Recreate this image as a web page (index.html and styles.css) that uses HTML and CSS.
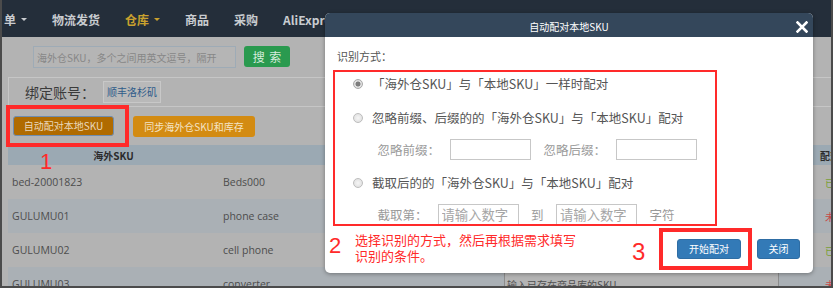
FILE: index.html
```html
<!DOCTYPE html>
<html lang="zh-CN">
<head>
<meta charset="utf-8">
<title>自动配对本地SKU</title>
<link rel="stylesheet" href="styles.css">
</head>
<body>
<div class="screen">
  <nav class="topnav">
    <span class="nav-item">单<i class="caret"></i></span>
    <span class="nav-item">物流发货</span>
    <span class="nav-item active">仓库<i class="caret"></i></span>
    <span class="nav-item">商品</span>
    <span class="nav-item">采购</span>
    <span class="nav-item">AliExpress<i class="caret"></i></span>
    <span class="nav-item">Wish</span>
    <span class="nav-item">eBay</span>
    <span class="nav-item">Amazon</span>
  </nav>

  <main class="content">
    <div class="search-row">
      <input class="search-input" type="text" placeholder="海外仓SKU，多个之间用英文逗号，隔开">
      <button class="search-btn" type="button">搜 索</button>
    </div>

    <div class="account-panel">
      <span class="account-label">绑定账号：</span>
      <span class="account-tag">顺丰洛杉矶</span>
    </div>

    <div class="action-row">
      <button class="btn-auto" type="button">自动配对本地SKU</button>
      <button class="btn-sync" type="button">同步海外仓SKU和库存</button>
    </div>

    <div class="sku-table">
      <div class="tr thead">
        <div class="th">海外SKU</div>
        <div class="th">本地SKU</div>
        <div class="th">商品SKU</div>
        <div class="th">配对状态</div>
      </div>
      <div class="tr">
        <div class="td">bed-20001823</div>
        <div class="td">Beds000</div>
        <div class="td"><input class="cell-input" type="text" placeholder="输入已存在商品库的SKU"></div>
        <div class="td status ok">已配对</div>
      </div>
      <div class="tr alt">
        <div class="td">GULUMU01</div>
        <div class="td">phone case</div>
        <div class="td"><input class="cell-input" type="text" placeholder="输入已存在商品库的SKU"></div>
        <div class="td status no">未配对</div>
      </div>
      <div class="tr">
        <div class="td">GULUMU02</div>
        <div class="td">cell phone</div>
        <div class="td"><input class="cell-input" type="text" placeholder="输入已存在商品库的SKU"></div>
        <div class="td status ok">已配对</div>
      </div>
      <div class="tr alt">
        <div class="td">GULUMU03</div>
        <div class="td">converter</div>
        <div class="td"><input class="cell-input" type="text" placeholder="输入已存在商品库的SKU"></div>
        <div class="td status no">未配对</div>
      </div>
    </div>
  </main>

  <div class="modal">
    <div class="modal-head">
      <span></span>
      <span class="modal-title">自动配对本地SKU</span>
      <svg class="modal-close" width="12" height="12" viewBox="0 0 12 12" aria-label="关闭">
        <path d="M1.5 1.5 L10.5 10.5 M10.5 1.5 L1.5 10.5" stroke="#fff" stroke-width="2.6" stroke-linecap="square" fill="none"/>
      </svg>
    </div>
    <div class="modal-body">
      <div class="mode-label">识别方式：</div>
      <div class="options">
        <label class="opt-row"><input class="radio" type="radio" name="mode" checked><span>「海外仓SKU」与「本地SKU」一样时配对</span></label>
        <label class="opt-row"><input class="radio" type="radio" name="mode"><span>忽略前缀、后缀的的「海外仓SKU」与「本地SKU」配对</span></label>
        <div class="sub-row">
          <span class="sub-label">忽略前缀：</span>
          <input class="field gap-s" type="text">
          <span class="sub-label gap-l">忽略后缀：</span>
          <input class="field gap-s" type="text">
        </div>
        <label class="opt-row"><input class="radio" type="radio" name="mode"><span>截取后的的「海外仓SKU」与「本地SKU」配对</span></label>
        <div class="sub-row">
          <span class="sub-label">截取第：</span>
          <input class="field gap-s" type="text" placeholder="请输入数字">
          <span class="sub-label gap-l">到</span>
          <input class="field gap-l" type="text" placeholder="请输入数字">
          <span class="sub-label gap-l">字符</span>
        </div>
      </div>
      <div class="modal-foot">
        <button class="btn-primary" type="button">开始配对</button>
        <button class="btn-close" type="button">关闭</button>
      </div>
    </div>
  </div>

  <div class="mark-box box-1"></div>
  <div class="mark-box box-2"></div>
  <div class="mark-box box-3"></div>
  <span class="mark-num num-1">1</span>
  <span class="mark-num num-2">2</span>
  <span class="mark-num num-3">3</span>
  <p class="mark-note">选择识别的方式，然后再根据需求填写<br>识别的条件。</p>
</div>
</body>
</html>
```

FILE: styles.css
```css
* { box-sizing: border-box; }

html, body {
  margin: 0;
  background: #ffffff;
}

body {
  font-family: "Noto Sans CJK SC", sans-serif;
}

.screen {
  position: relative;
  width: 833px;
  height: 288px;
  overflow: hidden;
  background: #b3b3b3;
  border: 2px solid #4b4b4b;
  border-top: 0;
}

/* ---------- top navigation ---------- */
.topnav {
  height: 37px;
  background: #242e3a;
  display: flex;
  align-items: center;
  gap: 25px;
  padding: 2px 0 0 2px;
  font-size: 12px;
  font-weight: 700;
  line-height: 14px;
  color: #c9ccd0;
  white-space: nowrap;
}

.nav-item {
  display: flex;
  align-items: center;
}

.nav-item.active { color: #c9a12e; }

.caret {
  width: 0;
  height: 0;
  margin-left: 5px;
  border-left: 3px solid transparent;
  border-right: 3px solid transparent;
  border-top: 3px solid currentColor;
}

/* ---------- page content ---------- */
.content {
  padding-top: 9px;
}

.search-row {
  display: flex;
  align-items: flex-start;
  height: 22px;
  padding-left: 31px;
}

.search-input {
  width: 203px;
  height: 22px;
  margin: 0;
  padding: 0 3px;
  border: 1px solid #9eabb6;
  background: #b5b5b5;
  font-family: "Noto Sans CJK SC", sans-serif;
  font-size: 10px;
  color: #555;
  outline: none;
}

.search-input::placeholder { color: #878787; }

.search-btn {
  width: 46px;
  height: 21px;
  margin-left: 8px;
  padding: 0;
  border: 0;
  border-radius: 3px;
  background: #2a9a4f;
  color: #d5ebdc;
  font-family: "Noto Sans CJK SC", sans-serif;
  font-size: 12px;
  line-height: 21px;
  word-spacing: 2px;
}

.account-panel {
  display: flex;
  align-items: center;
  height: 30px;
  margin: 9px 0 0 6px;
  padding-left: 16px;
  border: 1px solid #c6c6c6;
  border-right: 0;
}

.account-label {
  font-size: 14px;
  line-height: 16px;
  color: #3b3b3b;
}

.account-tag {
  height: 22px;
  margin-left: 8px;
  padding: 0 3px;
  border: 1px solid #c8c8c8;
  background: #b9b9b9;
  font-size: 10px;
  line-height: 20px;
  color: #2e5b8a;
}

.action-row {
  display: flex;
  align-items: flex-start;
  gap: 19px;
  margin-top: 9px;
  padding-left: 11px;
}

.btn-auto,
.btn-sync {
  padding: 0;
  border-radius: 3px;
  font-family: "Noto Sans CJK SC", sans-serif;
  font-size: 10px;
}

.btn-auto {
  width: 101px;
  height: 20px;
  border: 1px solid #6f8db0;
  background: #b06b00;
  color: #ead8bd;
  line-height: 18px;
}

.btn-sync {
  width: 122px;
  height: 21px;
  border: 0;
  background: #d38b12;
  color: #f3e3c6;
  line-height: 21px;
}

/* ---------- table ---------- */
.sku-table {
  width: 861px;
  margin: 8px 0 0 6px;
  font-family: "Open Sans", "Noto Sans CJK SC", sans-serif;
  font-size: 10.5px;
  color: #4d4d4d;
}

.tr {
  display: grid;
  grid-template-columns: 211px 281px 311px 58px;
}

.tr.alt { background: #aab0b5; }

.thead { background: #9ba9b3; }

.th {
  height: 20px;
  display: flex;
  align-items: center;
  justify-content: center;
  font-family: "Noto Sans CJK SC", sans-serif;
  font-size: 10px;
  font-weight: 700;
  color: #2b2b2b;
  white-space: nowrap;
}

.td {
  height: 34px;
  display: flex;
  align-items: center;
  padding-left: 4px;
  white-space: nowrap;
}

.td.status {
  justify-content: center;
  padding-left: 0;
  font-family: "Noto Sans CJK SC", sans-serif;
  font-size: 10px;
}

.td.ok { color: #7a9f37; }
.td.no { color: #c94848; }

.cell-input {
  width: 275px;
  height: 24px;
  margin: 0;
  padding: 0 2px;
  border: 1px solid #8c8c8c;
  background: #b4b4b4;
  font-family: "Noto Sans CJK SC", sans-serif;
  font-size: 10px;
}

.cell-input::placeholder { color: #505050; }

/* ---------- modal ---------- */
.modal {
  position: absolute;
  left: 323px;
  top: 13px;
  width: 488px;
  background: #ffffff;
  border-radius: 5px;
  overflow: hidden;
  box-shadow: 0 1px 4px rgba(0, 0, 0, 0.35);
  font-family: "Noto Sans CJK SC", sans-serif;
}

.modal-head {
  height: 24px;
  display: grid;
  grid-template-columns: 1fr auto 1fr;
  align-items: center;
  padding: 3px 5px 0;
  background: #34475b;
  color: #ffffff;
}

.modal-title {
  font-size: 10px;
  line-height: 14px;
}

.modal-close {
  justify-self: end;
  display: block;
}

.modal-body {
  padding: 12px 13px 14px 12px;
}

.mode-label {
  font-size: 11px;
  line-height: 14px;
  color: #555;
}

.options {
  margin-top: 4px;
  font-size: 12.5px;
  color: #555;
}

.opt-row {
  display: flex;
  align-items: center;
  height: 34px;
  padding-left: 16px;
  line-height: 16px;
  white-space: nowrap;
}

.radio {
  appearance: none;
  -webkit-appearance: none;
  width: 10px;
  height: 10px;
  margin: 0 9px 0 0;
  border: 1px solid #bdbdbd;
  border-radius: 50%;
  background: radial-gradient(circle, #f5f5f5 0, #dcdcdc 100%);
  flex: none;
}

.radio:checked {
  border-color: #a9a9a9;
  background: radial-gradient(circle, #7d7d7d 0, #7d7d7d 2.2px, #e2e2e2 2.8px, #d6d6d6 100%);
}

.sub-row {
  display: flex;
  align-items: flex-start;
  height: 31px;
  padding: 4px 0 0 40.5px;
  white-space: nowrap;
}

.sub-label {
  line-height: 21px;
  color: #9a9a9a;
}

.field {
  width: 81px;
  height: 21px;
  margin: 0;
  padding: 0 3px;
  border: 1px solid #c7c7c7;
  background: #ffffff;
  font-family: "Noto Sans CJK SC", sans-serif;
  font-size: 13.33px;
  outline: none;
}

.field::placeholder { color: #a6a6a6; }

.gap-s { margin-left: 10px; }
.gap-l { margin-left: 12.5px; }

.modal-foot {
  display: flex;
  justify-content: flex-end;
  gap: 16px;
  margin-top: 8px;
}

.btn-primary,
.btn-close {
  height: 20px;
  padding: 0;
  border: 1px solid #2e6da4;
  border-radius: 3px;
  background: #337ab7;
  color: #ffffff;
  font-family: "Noto Sans CJK SC", sans-serif;
  font-size: 10px;
  line-height: 18px;
}

.btn-primary { width: 64px; }
.btn-close { width: 43px; }

/* ---------- red annotations ---------- */
.mark-box {
  position: absolute;
  border: 4px solid #ff2a2a;
}

.box-1 { left: 4px; top: 105px; width: 123px; height: 42px; }
.box-2 { left: 331px; top: 70px; width: 384px; height: 156px; border-width: 2px; }
.box-3 { left: 657px; top: 228px; width: 93px; height: 42px; }

.mark-num {
  position: absolute;
  font-family: "Liberation Sans", sans-serif;
  line-height: 1;
  color: #ff2a2a;
}

.num-1 { left: 38px; top: 151px; font-size: 22px; }
.num-2 { left: 327px; top: 235px; font-size: 22px; }
.num-3 { left: 630px; top: 240px; font-size: 24px; }

.mark-note {
  position: absolute;
  left: 353px;
  top: 232px;
  margin: 0;
  font-size: 13px;
  line-height: 16px;
  color: #ff2a2a;
  white-space: nowrap;
}
```
